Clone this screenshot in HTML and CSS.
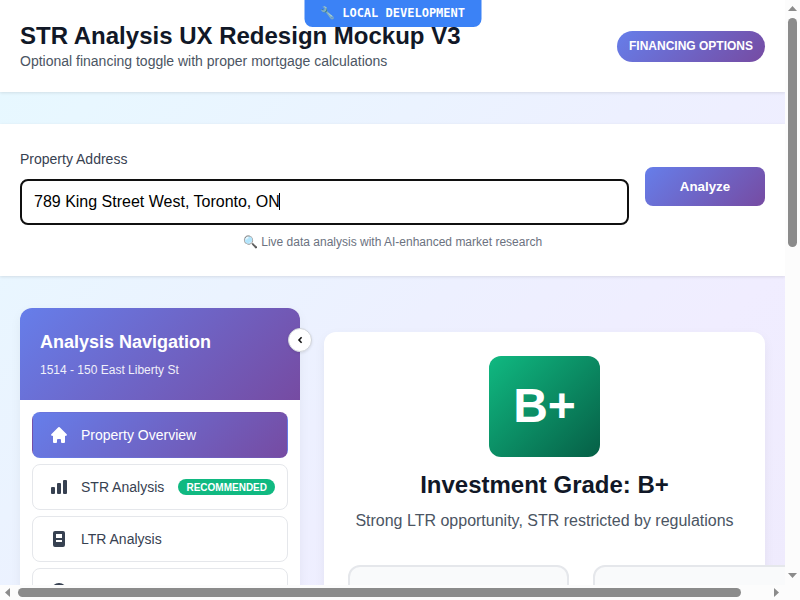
FILE: index.html
```
<!DOCTYPE html>
<html lang="en">
<head>
<meta charset="utf-8">
<title>STR Analysis UX Redesign Mockup V3</title>
<link rel="stylesheet" href="styles.css">
</head>
<body>
<div class="window">
  <div class="viewport">
    <div class="env-badge">🔧 LOCAL DEVELOPMENT</div>
    <header class="header">
      <div>
        <h1>STR Analysis UX Redesign Mockup V3</h1>
        <p>Optional financing toggle with proper mortgage calculations</p>
      </div>
      <button class="financing">FINANCING OPTIONS</button>
    </header>
    <section class="search">
      <div class="search-row">
        <div class="field">
          <label>Property Address</label>
          <div class="input"><span>789 King Street West, Toronto, ON</span><i class="caret"></i></div>
        </div>
        <button class="analyze">Analyze</button>
      </div>
      <p class="hint">🔍 Live data analysis with AI-enhanced market research</p>
    </section>
    <main class="layout">
      <aside class="sidebar">
        <div class="side-head">
          <h2>Analysis Navigation</h2>
          <p>1514 - 150 East Liberty St</p>
        </div>
        <div class="collapse"><svg width="12" height="12" viewBox="0 0 12 12"><path d="M7.6 3.3 5 6l2.6 2.7" fill="none" stroke="#111" stroke-width="1.6"/></svg></div>
        <nav class="nav">
          <a class="item active"><svg width="20" height="20" viewBox="0 0 20 20"><path d="M10.7 2.3a1 1 0 0 0-1.4 0l-7 7a1 1 0 0 0 1.4 1.4l.3-.3V17a1 1 0 0 0 1 1h2a1 1 0 0 0 1-1v-2a1 1 0 0 1 1-1h2a1 1 0 0 1 1 1v2a1 1 0 0 0 1 1h2a1 1 0 0 0 1-1v-6.6l.3.3a1 1 0 0 0 1.4-1.4z"/></svg><span>Property Overview</span></a>
          <a class="item"><svg width="20" height="20" viewBox="0 0 20 20"><path d="M2 11a1 1 0 0 1 1-1h2a1 1 0 0 1 1 1v5a1 1 0 0 1-1 1H3a1 1 0 0 1-1-1zM8 7a1 1 0 0 1 1-1h2a1 1 0 0 1 1 1v9a1 1 0 0 1-1 1H9a1 1 0 0 1-1-1zM14 4a1 1 0 0 1 1-1h2a1 1 0 0 1 1 1v12a1 1 0 0 1-1 1h-2a1 1 0 0 1-1-1z"/></svg><span>STR Analysis</span><b class="tag">RECOMMENDED</b></a>
          <a class="item"><svg width="20" height="20" viewBox="0 0 20 20"><path fill-rule="evenodd" d="M4 4a2 2 0 0 1 2-2h8a2 2 0 0 1 2 2v12a2 2 0 0 1-2 2H6a2 2 0 0 1-2-2zM7 5h6v4H7zM7 11h6v2H7z"/></svg><span>LTR Analysis</span></a>
          <a class="item"><svg width="20" height="20" viewBox="0 0 20 20"><circle cx="10" cy="10" r="8"/></svg></a>
        </nav>
      </aside>
      <section class="report">
        <div class="grade">B+</div>
        <h2>Investment Grade: B+</h2>
        <p>Strong LTR opportunity, STR restricted by regulations</p>
        <div class="cards"><div class="card"></div><div class="card"></div></div>
      </section>
    </main>
  </div>
  <div class="bar vertical"><i class="arrow up"></i><i class="thumb"></i><i class="arrow down"></i></div>
  <div class="bar horizontal"><i class="arrow left"></i><i class="thumb"></i><i class="arrow right"></i></div>
  <div class="corner"></div>
</div>
</body>
</html>
```
FILE: styles.css
```
* { box-sizing: border-box; margin: 0; padding: 0; }
body { width: 800px; height: 600px; overflow: hidden; font-family: "Liberation Sans", Arial, sans-serif; color: #111827; }
button { border: 0; font-family: inherit; color: #fff; font-weight: 700; background: linear-gradient(135deg, #667eea 0%, #764ba2 100%); }
.window { display: grid; grid-template: 585px 15px / 785px 15px; }
.viewport { position: relative; overflow: hidden; background: linear-gradient(135deg, #e6f8ff 0%, #e8f7ff 14%, #ebf3ff 38%, #edf0ff 54%, #f0edff 76%, #efebfd 100%); }

.env-badge { position: absolute; top: 0; left: 50%; transform: translateX(-50%); margin-left: 0.5px; width: 177px; height: 27px; padding-right: 1px; border-radius: 0 0 8px 8px; background: #3b82f6; color: #fff; font: 700 12px/26px "DejaVu Sans Mono", monospace; text-align: center; white-space: nowrap; }

.header { display: flex; justify-content: space-between; align-items: center; height: 92px; padding: 0 20px; background: #fff; box-shadow: 0 1px 3px rgba(0,0,0,.1); }
.header h1 { font-size: 24px; line-height: 28px; margin-bottom: 1px; }
.header p { font-size: 14px; line-height: 20px; color: #4b5563; }
.financing { width: 148px; height: 31px; border-radius: 16px; font-size: 12px; }

.search { height: 152px; margin-top: 32px; padding: 24px 20px; background: #fff; box-shadow: 0 1px 3px rgba(0,0,0,.1); }
.search-row { display: flex; align-items: center; gap: 16px; height: 77px; }
.field { flex: 1; }
.field label { display: block; font-size: 14px; line-height: 22px; margin-bottom: 9px; color: #374151; }
.input { display: flex; align-items: center; height: 46px; padding: 0 12px; border: 2px solid #101010; border-radius: 8px; font-size: 16px; color: #000; }
.caret { width: 1px; height: 17px; margin-left: -1px; margin-top: -1px; background: #000; }
.analyze { width: 120px; height: 39px; border-radius: 8px; font-size: 13.333px; }
.hint { margin-top: 8px; font-size: 12px; line-height: 18px; text-align: center; color: #6b7280; }

.layout { display: grid; grid-template-columns: 280px 441px; gap: 24px; padding: 32px 20px 0; }
.sidebar { position: relative; height: 700px; background: #fff; border-radius: 12px; box-shadow: 0 4px 12px rgba(0,0,0,.05); }
.side-head { height: 92px; padding: 20px; border-radius: 12px 12px 0 0; color: #fff; background: linear-gradient(135deg, #667eea 0%, #764ba2 100%); }
.side-head h2 { font-size: 18px; line-height: 28px; margin-bottom: 4px; }
.side-head p { font-size: 12px; line-height: 20px; opacity: .9; }
.collapse { position: absolute; top: 20px; right: -12px; display: grid; place-items: center; width: 24px; height: 24px; border-radius: 50%; background: #fff; border: 1px solid #d1d5db; box-shadow: 0 1px 3px rgba(0,0,0,.1); }
.nav { display: grid; gap: 6px; padding: 12px; }
.item { display: flex; align-items: center; height: 46px; padding: 0 12px 0 16px; border: 1px solid #e5e7eb; border-radius: 8px; font-size: 14px; color: #374151; }
.item svg { margin-right: 12px; fill: currentColor; }
.item.active { color: #fff; border-color: transparent; background: linear-gradient(135deg, #667eea 0%, #764ba2 100%); }
.tag { margin-left: auto; height: 16px; padding: 0 8px; border-radius: 8px; background: #10b981; color: #fff; font-size: 10px; line-height: 17px; }

.report { display: flex; flex-direction: column; align-items: center; margin-top: 24px; padding: 24px; background: #fff; border-radius: 12px; box-shadow: 0 4px 12px rgba(0,0,0,.05); }
.grade { width: 111px; height: 101px; border-radius: 12px; background: linear-gradient(135deg, #10b981 0%, #065f46 100%); color: #fff; font-size: 48px; font-weight: 700; line-height: 100px; text-align: center; }
.report h2 { margin-top: 13px; font-size: 24px; line-height: 30px; }
.report p { margin-top: 10px; font-size: 16px; line-height: 22px; color: #4b5563; white-space: nowrap; }
.cards { display: grid; grid-template-columns: 221px 221px; gap: 24px; align-self: flex-start; margin-top: 33px; }
.card { height: 150px; border: 2px solid #e5e7eb; border-radius: 12px; background: #f9fafb; }

.bar { display: flex; align-items: center; background: #fcfcfc; }
.vertical { flex-direction: column; padding: 6px 0 7px; }
.horizontal { padding: 0 6px 0 5px; }
.thumb { border-radius: 5px; background: #8b8b8b; }
.vertical .thumb { width: 9px; height: 229px; margin: 7px 0 auto; }
.horizontal .thumb { width: 723px; height: 9px; margin: 0 auto 0 8px; }
.arrow { background: #8b8b8b; }
.up, .down { width: 9px; height: 5px; }
.left, .right { width: 5px; height: 9px; }
.up { clip-path: polygon(50% 0, 100% 100%, 0 100%); }
.down { clip-path: polygon(0 0, 100% 0, 50% 100%); }
.left { clip-path: polygon(100% 0, 100% 100%, 0 50%); }
.right { clip-path: polygon(0 0, 100% 50%, 0 100%); }
.corner { background: #fcfcfc; }
```
